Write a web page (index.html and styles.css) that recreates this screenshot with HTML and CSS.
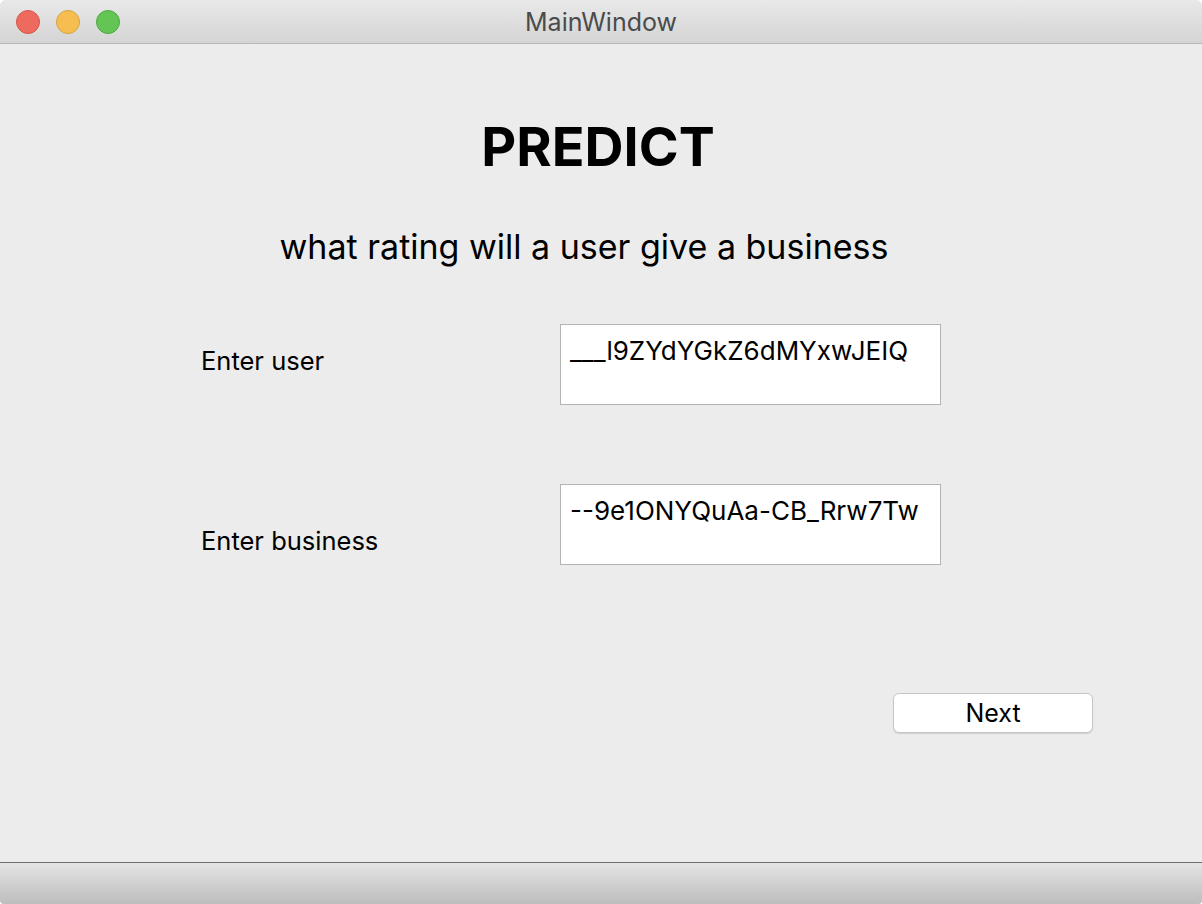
FILE: index.html
```html
<!DOCTYPE html>
<html>
<head>
<meta charset="utf-8">
<link rel="stylesheet" href="styles.css">
</head>
<body>
<div class="window">
  <div class="titlebar">
    <div class="lights">
      <span class="light red"></span>
      <span class="light yellow"></span>
      <span class="light green"></span>
    </div>
    <div class="title">MainWindow</div>
  </div>
  <div class="content">
    <h1 class="heading">PREDICT</h1>
    <p class="subtitle">what rating will a user give a business</p>
    <div class="row row-user">
      <label class="label label-user">Enter user</label>
      <div class="field">___l9ZYdYGkZ6dMYxwJEIQ</div>
    </div>
    <div class="row row-business">
      <label class="label label-business">Enter business</label>
      <div class="field">--9e1ONYQuAa-CB_Rrw7Tw</div>
    </div>
    <div class="actions">
      <button class="btn">Next</button>
    </div>
  </div>
  <div class="statusbar"></div>
</div>
</body>
</html>
```
FILE: styles.css
```css
* { box-sizing: border-box; }
html, body { margin: 0; padding: 0; background: #ffffff; }
body { font-family: Inter, "Noto Sans", sans-serif; color: #000; }

.window {
  width: 1202px;
  height: 904px;
  display: flex;
  flex-direction: column;
  background: #ececec;
  border-radius: 6px 6px 4px 4px;
  overflow: hidden;
}

.titlebar {
  height: 44px;
  flex: none;
  position: relative;
  background: linear-gradient(#e9e9e9, #d4d4d4);
  border-bottom: 1px solid #b8b8b8;
  display: flex;
  align-items: center;
  justify-content: center;
}
.lights {
  position: absolute;
  left: 16px;
  top: 10px;
  display: flex;
  gap: 16px;
}
.light {
  width: 24px;
  height: 24px;
  border-radius: 50%;
  display: block;
}
.red { background: #ee6a5f; border: 1px solid #d8544a; }
.yellow { background: #f6be50; border: 1px solid #d9a23f; }
.green { background: #62c554; border: 1px solid #4fa83f; }
.title {
  font-size: 25px;
  color: #4b4b4b;
  margin-top: 1px;
}

.content {
  flex: 1;
  display: flex;
  flex-direction: column;
}
.heading {
  margin: 70px 0 0 0;
  padding-right: 6px;
  text-align: center;
  font-size: 54px;
  line-height: 66px;
  font-weight: 700;
}
.subtitle {
  margin: 47px 0 0 0;
  padding-right: 34px;
  text-align: center;
  font-size: 34px;
  line-height: 40px;
}

.row {
  display: flex;
  align-items: flex-start;
  padding-left: 201px;
}
.row-user { margin-top: 57px; }
.row-business { margin-top: 79px; }
.label {
  width: 359px;
  font-size: 25.5px;
  line-height: 30px;
}
.label-user { margin-top: 22px; }
.label-business { margin-top: 42px; }
.field {
  width: 381px;
  height: 81px;
  background: #fff;
  border: 1px solid #b3b3b3;
  padding: 13px 9px 0 9px;
  font-size: 26px;
  line-height: 26px;
  white-space: nowrap;
}

.actions {
  display: flex;
  justify-content: flex-end;
  padding-right: 109px;
  margin-top: 128px;
}
.btn {
  width: 200px;
  height: 40px;
  background: #fff;
  border: 1px solid #c6c6c6;
  border-radius: 6px;
  box-shadow: 0 1px 1px rgba(0,0,0,0.12);
  font-family: Inter, "Noto Sans", sans-serif;
  font-size: 25px;
  color: #000;
  padding: 0;
}

.statusbar {
  height: 42px;
  flex: none;
  border-top: 1px solid #6e6e6e;
  background: linear-gradient(#e4e4e4, #bdbdbd);
}
```
